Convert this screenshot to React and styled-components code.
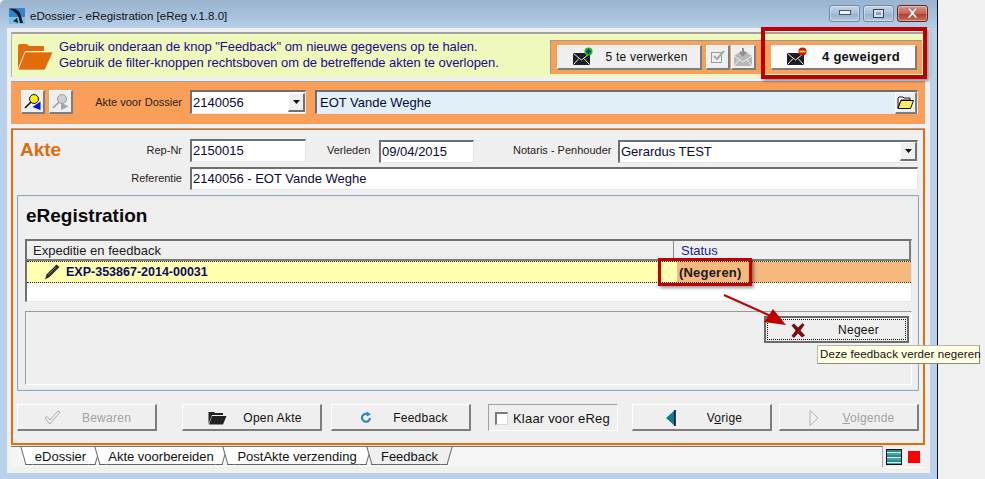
import React from "react"
import styled, { createGlobalStyle } from "styled-components"

const Global = createGlobalStyle`
    html, body { margin: 0; padding: 0; background: #f0f0f0; }
    body { font-family: "Liberation Sans", Arial, sans-serif; font-size: 12px; color: #111; }
    * { box-sizing: border-box; }
`

const Page = styled.div`
    position: relative;
    width: 985px;
    height: 479px;
    overflow: hidden;
`

const Win = styled.div`
    width: 938px;
    height: 479px;
    border-right: 1px solid #111;
    padding: 0 7px 6px;
    display: flex;
    flex-direction: column;
    background: linear-gradient(180deg, #9ab4d0 0, #a6bfda 14px, #b9d1ea 30px);
    border-top-left-radius: 5px;
`

const TitleBar = styled.div`
    height: 28px;
    display: flex;
    align-items: center;
    padding: 4px 2px 0 2px;
    font-size: 11.5px;
    color: #111;
`

const TitleText = styled.span`
    margin-left: 5px;
`

const WinButtons = styled.div`
    margin-left: auto;
    margin-top: -6px;
    display: flex;
    gap: 3px;
`

const WinBtn = styled.div`
    width: 31px;
    height: 17px;
    border: 1px solid ${p => (p.$close ? "#5c2a2a" : "#6f88a6")};
    border-radius: 3px;
    display: flex;
    align-items: center;
    justify-content: center;
    background: ${p =>
        p.$close
            ? "linear-gradient(180deg, #d99a90 0, #c8604f 50%, #b13a2b 52%, #c9705e 100%)"
            : "linear-gradient(180deg, #c3d4e7 0, #a9c0da 50%, #96b0cf 52%, #b3c9e0 100%)"};
    box-shadow: inset 0 0 0 1px rgba(255, 255, 255, 0.35);
`

const Client = styled.div`
    flex: 1;
    background: #f0f0f0;
    padding: 4px 5px 0 4px;
    display: flex;
    flex-direction: column;
`

const InfoBand = styled.div`
    height: 45px;
    background: #eef9bb;
    border-top: 2px solid #a3a3a3;
    border-left: 1px solid #b5b5b5;
    display: flex;
    align-items: center;
    padding-right: 3px;
`

const InfoFolder = styled.div`
    width: 41px;
    display: flex;
    justify-content: flex-end;
    margin-top: 2px;
`

const InfoText = styled.div`
    padding-left: 6px;
    font-size: 13px;
    line-height: 16px;
    letter-spacing: -0.05px;
    margin-top: -1px;
    color: #1c0a8c;
    white-space: nowrap;
`

const FilterBox = styled.div`
    margin-left: auto;
    margin-top: 2px;
    height: 34px;
    width: 372px;
    background: #fa9f5a;
    border-top: 1px solid #999;
    border-left: 1px solid #999;
    padding: 4px 5px 0 6px;
    display: flex;
    align-items: flex-start;
`

const Btn = styled.div`
    height: ${p => p.$h || 27}px;
    width: ${p => p.$w || 140}px;
    flex: none;
    margin-left: ${p => p.$ml || 0}px;
    display: flex;
    align-items: center;
    padding-left: ${p => (p.$inset === undefined ? 16 : p.$inset)}px;
    padding-top: ${p => (p.$h ? 0 : 1)}px;
    background: ${p => (p.$bright ? "#fbfbfb" : "#efefef")};
    border: 1px solid;
    border-color: #fff #7d7d7d #7d7d7d #fff;
    border-right-width: 2px;
    border-bottom-width: 2px;
    color: ${p => (p.$off ? "#a2a2a2" : "#111")};
    font-weight: ${p => (p.$bold ? 700 : 400)};
    font-size: ${p => p.$fs || 12}px;
    letter-spacing: 0.25px;
`

const BtnIcon = styled.span`
    width: 36px;
    display: flex;
    justify-content: center;
    flex: none;
`

const BtnLabel = styled.span`
    flex: 1;
    text-align: center;
    padding-left: ${p => p.$shift || 0}px;
    padding-right: 12px;
    white-space: nowrap;
`

const IconBtn = styled.div`
    width: ${p => p.$w || 24}px;
    height: ${p => p.$h || 24}px;
    flex: none;
    margin-left: ${p => p.$ml || 0}px;
    display: flex;
    align-items: center;
    justify-content: center;
    background: #efefef;
    border: 1px solid;
    border-color: #fff #7d7d7d #7d7d7d #fff;
    border-right-width: 2px;
    border-bottom-width: 2px;
`

const OrangeBand = styled.div`
    margin-top: 4px;
    height: 43px;
    background: #fa9f5a;
    border-top: 1px solid #a3a3a3;
    display: flex;
    align-items: center;
    padding: 0 7px 2px 10px;
`

const Label = styled.span`
    flex: none;
    width: ${p => p.$w}px;
    margin-left: ${p => p.$ml || 0}px;
    text-align: right;
    font-size: 11px;
    color: #2b2016;
    white-space: nowrap;
`

const Field = styled.div`
    flex: ${p => (p.$w ? "none" : 1)};
    width: ${p => (p.$w ? `${p.$w}px` : "auto")};
    margin-left: ${p => p.$ml || 8}px;
    height: ${p => p.$h || 23}px;
    margin-top: ${p => p.$mt || 0}px;
    display: flex;
    align-items: center;
    justify-content: space-between;
    background: ${p => p.$bg || "#fff"};
    border: 1px solid;
    border-color: #6f6f6f #e6e6e6 #e6e6e6 #6f6f6f;
    border-top-width: 2px;
    border-left-width: 2px;
    padding-left: ${p => p.$pl || 1}px;
    font-size: 13px;
    color: #08083a;
    white-space: nowrap;
`

const ComboArrow = styled.div`
    width: 17px;
    height: 19px;
    flex: none;
    display: flex;
    align-items: center;
    justify-content: center;
    background: #efefef;
    border: 1px solid;
    border-color: #fff #707070 #707070 #fff;
    border-right-width: 2px;
    border-bottom-width: 2px;
`

const Akte = styled.div`
    margin-top: 5px;
    height: 316px;
    background: #efefef;
    border: 2px solid #e46c0a;
    border-top-width: 1px;
    padding: 8px 4px 0;
    box-shadow: 0 -1px 0 #a3a3a3;
    display: flex;
    flex-direction: column;
`

const FormRow = styled.div`
    display: flex;
    align-items: center;
    height: 24px;
    margin-top: ${p => p.$mt || 0}px;
`

const AkteTitle = styled.div`
    width: 123px;
    padding-left: 3px;
    font-size: 19px;
    line-height: 24px;
    font-weight: 700;
    color: #e36c0a;
    flex: none;
`

const Group = styled.div`
    margin-top: 5px;
    height: 196px;
    border: 1px solid #93a9b8;
    box-shadow: inset 0 0 0 1px #d5eaf6;
    padding: 2px 6px 0 7px;
`

const GroupTitle = styled.div`
    margin: 7px 0 0 1px;
    height: 22px;
    font-size: 19px;
    line-height: 22px;
    font-weight: 700;
    color: #0a0a0a;
`

const Table = styled.div`
    margin-top: 12px;
    height: 63px;
    background: #fff;
    border: 1px solid;
    border-color: #707070 #e6e6e6 #e6e6e6 #707070;
    border-top-width: 2px;
    border-left-width: 2px;
`

const HeaderRow = styled.div`
    height: 20px;
    display: grid;
    grid-template-columns: 646px 1fr;
    background: #efefef;
`

const HeaderCell = styled.div`
    padding-left: ${p => p.$pl}px;
    display: flex;
    align-items: center;
    border-bottom: 2px solid #7d7d7d;
    border-right: ${p => (p.$last ? "2px solid #7d7d7d" : "0")};
    border-left: ${p => (p.$last ? "1px solid #8a8a8a" : "0")};
    font-size: 13px;
    color: ${p => p.$color};
`

const DataRow = styled.div`
    height: 22px;
    display: grid;
    grid-template-columns: 650px 1fr;
    border-top: 1px dotted #222;
    border-bottom: 1px dotted #222;
    background: #ffffb0;
`

const RowMain = styled.div`
    display: flex;
    align-items: center;
    gap: 6px;
    padding-left: 17px;
    font-weight: 700;
    font-size: 12.5px;
    color: #0a0a64;
`

const RowStatus = styled.div`
    background: #f5b87d;
    display: flex;
    align-items: center;
    padding-left: 2px;
    font-weight: 700;
    font-size: 13px;
    letter-spacing: 0.2px;
    color: #1b1b1b;
`

const Lower = styled.div`
    margin-top: 9px;
    height: 74px;
    border-top: 1px solid #9a9a9a;
    border-left: 1px solid #9a9a9a;
    border-bottom: 1px solid #fff;
    border-right: 1px solid #fff;
    padding: 4px 2px 0 0;
    display: flex;
    justify-content: flex-end;
    align-items: flex-start;
`

const NegeerBtn = styled(Btn)`
    position: relative;
    border-color: #6a6a6a;
    border-width: 2px;
    background: #efefef;
    &::after {
        content: "";
        position: absolute;
        inset: 1px;
        border: 1px dotted #111;
    }
`

const ButtonRow = styled.div`
    margin-top: 13px;
    display: flex;
    height: 27px;
`

const CheckGroup = styled.div`
    width: 130px;
    margin-left: ${p => p.$ml}px;
    height: 27px;
    flex: none;
    display: flex;
    align-items: center;
    padding: 1px 0 0 6px;
    gap: 5px;
    border: 1px solid;
    border-color: #a0a0a0 #fff #fff #a0a0a0;
    font-size: 13px;
    letter-spacing: 0.2px;
`

const CheckBox = styled.div`
    width: 13px;
    height: 13px;
    background: #fff;
    border: 1px solid;
    border-color: #7a7a7a #d8d8d8 #d8d8d8 #7a7a7a;
    border-top-width: 2px;
    border-left-width: 2px;
`

const TabStrip = styled.div`
    margin-top: 1px;
    height: 21px;
    background: #f5f5f5;
    border-top: 1px solid #777;
    display: flex;
    padding-left: 15px;
`

const Tab = styled.div`
    position: relative;
    width: ${p => p.$w}px;
    height: 18px;
    margin-left: ${p => p.$gap || 0}px;
    flex: none;
    background: ${p => (p.$active ? "#efefef" : "#fff")};
    border-bottom: 1px solid #666;
    display: flex;
    align-items: center;
    justify-content: center;
    padding-top: 1px;
    font-size: 13px;
    color: #111;
    z-index: ${p => (p.$active ? 2 : 1)};
    &::before,
    &::after {
        content: "";
        position: absolute;
        top: 0;
        bottom: -1px;
        width: 6px;
        background: inherit;
        border-bottom: 1px solid #666;
    }
    &::before {
        left: -3px;
        border-left: 1px solid #666;
        transform: skewX(16deg);
    }
    &::after {
        right: -3px;
        border-right: 1px solid #666;
        transform: skewX(-16deg);
    }
`

const TabText = styled.span`
    position: relative;
    z-index: 1;
`

const StatusBox = styled.div`
    margin-left: auto;
    width: 43px;
    height: 22px;
    margin-top: -1px;
    background: #f0f0f0;
    border-left: 1px solid #aaa;
    border-bottom: 1px solid #fff;
    display: flex;
    align-items: center;
    gap: 6px;
    padding-left: 3px;
`

const StackIcon = styled.div`
    width: 16px;
    height: 16px;
    border: 1px solid #111;
    background: repeating-linear-gradient(180deg, #2b8c8c 0 2px, #cfeeee 2px 3px, #4aa5a5 3px 5px);
`

const RedLed = styled.div`
    width: 12px;
    height: 12px;
    background: #f00;
`

/* annotation layer: these lie over the window */
const RedFrame = styled.div`
    position: absolute;
    left: ${p => p.$x}px;
    top: ${p => p.$y}px;
    width: ${p => p.$w}px;
    height: ${p => p.$h}px;
    border: ${p => p.$t}px solid #c00000;
    box-shadow: 2px 2px 3px rgba(0, 0, 0, 0.4);
`

const ArrowLayer = styled.svg`
    position: absolute;
    left: 715px;
    top: 285px;
`

const Tooltip = styled.div`
    position: absolute;
    left: 817px;
    top: 345px;
    width: 163px;
    height: 19px;
    background: #ffffe1;
    border: 1px solid #8a8a8a;
    border-left-color: #b5b5b5;
    border-top-color: #b5b5b5;
    font-size: 11.5px;
    line-height: 17px;
    padding-left: 2px;
    letter-spacing: 0.1px;
    white-space: nowrap;
    color: #111;
`

const AppIcon = () => (
    <svg width="16" height="16" viewBox="0 0 16 16">
        <rect width="16" height="16" fill="#2f86c8" />
        <rect x="0" y="9" width="16" height="7" fill="#7fc0e8" />
        <path d="M1 1 C7 0 11 3 12 8 L14 15 L11 15 L9.5 9 C8.5 6 6 4 1 1Z" fill="#08141f" />
        <path d="M4 13 L8 10 L9 15Z" fill="#08141f" />
    </svg>
)

const OrangeFolder = () => (
    <svg width="36" height="28" viewBox="0 0 36 28">
        <path d="M1 3 L2 1 H10 L12 3 H27 V8 H8 L1 26Z" fill="#e36c0a" />
        <path d="M8 9 H36 L28 27 H1Z" fill="#e36c0a" stroke="#fff" strokeWidth="0.6" />
    </svg>
)

const Envelope = ({ badge }) => (
    <svg width="21" height="19" viewBox="0 0 21 19">
        <rect x="0" y="6" width="17" height="12" fill="#1d1d24" />
        <path d="M0.5 6.5 L8.5 13 L16.5 6.5 M0.5 17.5 L6 11.5 M16.5 17.5 L11 11.5" fill="none" stroke="#e8e8e8" strokeWidth="1" />
        {badge === "plus" && (
            <>
                <circle cx="15.5" cy="4.5" r="4" fill="#00d000" />
                <path d="M15.5 2 V7 M13 4.5 H18" stroke="#0000c0" strokeWidth="1.6" />
            </>
        )}
        {badge === "minus" && (
            <>
                <circle cx="15.5" cy="4.5" r="4" fill="#d81010" />
                <path d="M12.5 4.5 H18.5" stroke="#ffe000" strokeWidth="1.8" />
            </>
        )}
    </svg>
)

const CheckOff = () => (
    <svg width="16" height="15" viewBox="0 0 16 15">
        <rect x="1.5" y="3.5" width="10" height="10" fill="none" stroke="#9c9c9c" />
        <path d="M4 7 L7 10 L14 2" fill="none" stroke="#a8a8a8" strokeWidth="2" />
    </svg>
)

const MailOff = () => (
    <svg width="20" height="20" viewBox="0 0 20 20">
        <path d="M1 9 L10 3 L19 9 V19 H1Z" fill="#b8b8b8" />
        <path d="M1 9 L10 15 L19 9 M1 19 L7 12 M19 19 L13 12" fill="none" stroke="#efefef" />
        <path d="M10 1 V8 M7 5 L10 8 L13 5" fill="none" stroke="#8e8e8e" strokeWidth="2" />
    </svg>
)

const KeyIcon = ({ off }) => (
    <svg width="18" height="18" viewBox="0 0 18 18">
        <circle cx="10" cy="6" r="4.5" fill={off ? "#cfcfcf" : "#ffef00"} stroke={off ? "#9a9a9a" : "#111"} />
        <path d="M7 9 L1 15" stroke={off ? "#9a9a9a" : "#111"} strokeWidth="1.6" />
        {off ? (
            <path d="M9 9.5 L16.5 13.5 L9 17Z" fill="#a5a5a5" />
        ) : (
            <path d="M16.5 8.5 V17 L8.5 14Z" fill="#0010e0" />
        )}
    </svg>
)

const SmallFolder = () => (
    <svg width="17" height="13" viewBox="0 0 17 13">
        <path d="M1 2 L2 1 H6 L7 2 H13 V4 H4 L1 12Z" fill="#fff" stroke="#111" />
        <path d="M4 4.5 H16.5 L13.5 12.5 H1Z" fill="#f6ee60" stroke="#111" />
    </svg>
)

const Pencil = () => (
    <svg width="16" height="16" viewBox="0 0 16 16">
        <path d="M12.5 0.5 L15.5 3 L5.5 13 L1 15.5 L2.5 10.5Z" fill="#2a2a2a" />
        <path d="M12 3 L4 11" stroke="#8a8a8a" strokeWidth="0.8" />
    </svg>
)

const Cross = () => (
    <svg width="14" height="15" viewBox="0 0 14 15">
        <path d="M0.5 2.5 L3 0.5 L7 4.5 L11.5 0 L13.5 2 L9.5 7.5 L14 12.5 L11 14.5 L7 10.5 L3 15 L0.5 13 L4.5 7.5Z" fill="#7b0f0f" />
    </svg>
)

const CheckLine = () => (
    <svg width="17" height="15" viewBox="0 0 17 15">
        <path d="M1 8 L3 6.5 L6 10 L14 1 L16 2 L6 14Z" fill="#f4f4f4" stroke="#a8a8a8" />
    </svg>
)

const OpenFolder = () => (
    <svg width="19" height="14" viewBox="0 0 19 14">
        <path d="M0.5 1 H6 L7 2 H15 V4 H4 L0.5 13Z" fill="#222" />
        <path d="M4 5 H18.5 L15 13.5 H1Z" fill="#222" />
    </svg>
)

const Refresh = () => (
    <svg width="12" height="13" viewBox="0 0 12 13">
        <path d="M8.5 3.6 A4 4 0 1 0 10 7" fill="none" stroke="#2e86b8" strokeWidth="2.2" />
        <path d="M7 0.5 L11 3.5 L6.5 5.5Z" fill="#2e86b8" />
    </svg>
)

const TriLeft = () => (
    <svg width="10" height="16" viewBox="0 0 10 16">
        <path d="M9 0 V16 L0 8Z" fill="#0a7f86" />
        <path d="M9 0 V16" stroke="#0a0a50" strokeWidth="1.6" />
    </svg>
)

const TriRight = () => (
    <svg width="10" height="16" viewBox="0 0 10 16">
        <path d="M1 0.5 V15.5 L9 8Z" fill="#f2f2f2" stroke="#b0b0b0" />
    </svg>
)

const ComboGlyph = () => (
    <svg width="7" height="4" viewBox="0 0 7 4">
        <path d="M0 0 H7 L3.5 4Z" fill="#111" />
    </svg>
)

export default function App() {
    return (
        <Page>
            <Global />
            <Win>
                <TitleBar>
                    <AppIcon />
                    <TitleText>eDossier - eRegistration [eReg v.1.8.0]</TitleText>
                    <WinButtons>
                        <WinBtn>
                            <svg width="12" height="6"><rect x="0.5" y="0.5" width="11" height="4" fill="#eef3f8" stroke="#48566a" /></svg>
                        </WinBtn>
                        <WinBtn>
                            <svg width="11" height="9"><rect x="0.5" y="0.5" width="10" height="8" fill="#d5e0ec" stroke="#3a4454" /><rect x="3" y="3" width="5" height="3" fill="#8da4bf" /></svg>
                        </WinBtn>
                        <WinBtn $close>
                            <svg width="13" height="10" viewBox="0 0 13 10"><path d="M1 0 H4 L6.5 3 L9 0 H12 L8 5 L12 10 H9 L6.5 7 L4 10 H1 L5 5Z" fill="#f4f0ef" stroke="#5d3030" strokeWidth="0.5" /></svg>
                        </WinBtn>
                    </WinButtons>
                </TitleBar>
                <Client>
                    <InfoBand>
                        <InfoFolder>
                            <OrangeFolder />
                        </InfoFolder>
                        <InfoText>
                            Gebruik onderaan de knop "Feedback" om nieuwe gegevens op te halen.
                            <br />
                            Gebruik de filter-knoppen rechtsboven om de betreffende akten te overlopen.
                        </InfoText>
                        <FilterBox>
                            <Btn $w={145} $h={25} $inset={7}>
                                <BtnIcon><Envelope badge="plus" /></BtnIcon>
                                <BtnLabel $shift={4}>5 te verwerken</BtnLabel>
                            </Btn>
                            <IconBtn $ml={4} $w={24} $h={25}><CheckOff /></IconBtn>
                            <IconBtn $ml={1} $w={25} $h={25}><MailOff /></IconBtn>
                            <Btn $ml={15} $w={146} $h={25} $inset={7} $bright $bold $fs={13}>
                                <BtnIcon><Envelope badge="minus" /></BtnIcon>
                                <BtnLabel $shift={4}>4 geweigerd</BtnLabel>
                            </Btn>
                        </FilterBox>
                    </InfoBand>

                    <OrangeBand>
                        <IconBtn><KeyIcon /></IconBtn>
                        <IconBtn $ml={4}><KeyIcon off /></IconBtn>
                        <Label $w={87} $ml={22}>Akte voor Dossier</Label>
                        <Field $w={116} $h={24}>
                            2140056
                            <ComboArrow><ComboGlyph /></ComboArrow>
                        </Field>
                        <Field $ml={9} $h={24} $bg="#e1f0f8" $pl={3}>
                            EOT Vande Weghe
                            <IconBtn $w={22} $h={22}><SmallFolder /></IconBtn>
                        </Field>
                    </OrangeBand>

                    <Akte>
                        <FormRow>
                            <AkteTitle>Akte</AkteTitle>
                            <Label $w={42}>Rep-Nr</Label>
                            <Field $w={116}>2150015</Field>
                            <Label $w={43} $ml={21}>Verleden</Label>
                            <Field $w={95} $ml={9} $mt={2}>09/04/2015</Field>
                            <Label $w={96} $ml={39}>Notaris - Penhouder</Label>
                            <Field $w={300} $ml={9} $mt={2}>
                                Gerardus TEST
                                <ComboArrow><ComboGlyph /></ComboArrow>
                            </Field>
                        </FormRow>
                        <FormRow $mt={4}>
                            <Label $w={165}>Referentie</Label>
                            <Field $w={728} $ml={8}>2140056 - EOT Vande Weghe</Field>
                        </FormRow>
                        <Group>
                            <GroupTitle>eRegistration</GroupTitle>
                            <Table>
                                <HeaderRow>
                                    <HeaderCell $pl={6} $color="#222">Expeditie en feedback</HeaderCell>
                                    <HeaderCell $pl={7} $last $color="#1a1aa0">Status</HeaderCell>
                                </HeaderRow>
                                <DataRow>
                                    <RowMain>
                                        <Pencil />
                                        EXP-353867-2014-00031
                                    </RowMain>
                                    <RowStatus>(Negeren)</RowStatus>
                                </DataRow>
                            </Table>
                            <Lower>
                                <NegeerBtn $w={145} $inset={14}>
                                    <BtnIcon><Cross /></BtnIcon>
                                    <BtnLabel $shift={6}>Negeer</BtnLabel>
                                </NegeerBtn>
                            </Lower>
                        </Group>
                        <ButtonRow>
                            <Btn $off>
                                <BtnIcon><CheckLine /></BtnIcon>
                                <BtnLabel>Bewaren</BtnLabel>
                            </Btn>
                            <Btn $ml={25}>
                                <BtnIcon><OpenFolder /></BtnIcon>
                                <BtnLabel $shift={2}>Open Akte</BtnLabel>
                            </Btn>
                            <Btn $ml={9}>
                                <BtnIcon><Refresh /></BtnIcon>
                                <BtnLabel>Feedback</BtnLabel>
                            </Btn>
                            <CheckGroup $ml={17}>
                                <CheckBox />
                                Klaar voor eReg
                            </CheckGroup>
                            <Btn $ml={14} $inset={20}>
                                <BtnIcon><TriLeft /></BtnIcon>
                                <BtnLabel $shift={2}>V<u>o</u>rige</BtnLabel>
                            </Btn>
                            <Btn $ml={7} $off>
                                <BtnIcon><TriRight /></BtnIcon>
                                <BtnLabel><u>V</u>olgende</BtnLabel>
                            </Btn>
                        </ButtonRow>
                    </Akte>

                    <TabStrip>
                        <Tab $w={69}><TabText>eDossier</TabText></Tab>
                        <Tab $w={122} $gap={5}><TabText>Akte voorbereiden</TabText></Tab>
                        <Tab $w={138} $gap={6}><TabText>PostAkte verzending</TabText></Tab>
                        <Tab $w={75} $gap={6} $active><TabText>Feedback</TabText></Tab>
                        <StatusBox>
                            <StackIcon />
                            <RedLed />
                        </StatusBox>
                    </TabStrip>
                </Client>
            </Win>

            <RedFrame $x={761} $y={27} $w={166} $h={52} $t={4} />
            <RedFrame $x={658} $y={258} $w={94} $h={28} $t={3} />
            <ArrowLayer width="80" height="50" viewBox="0 0 80 50">
                <path d="M9 10 L58 32" stroke="#c00000" strokeWidth="2" />
                <path d="M71 40 L49 37 L58 24Z" fill="#c00000" />
            </ArrowLayer>
            <Tooltip>Deze feedback verder negeren</Tooltip>
        </Page>
    )
}
